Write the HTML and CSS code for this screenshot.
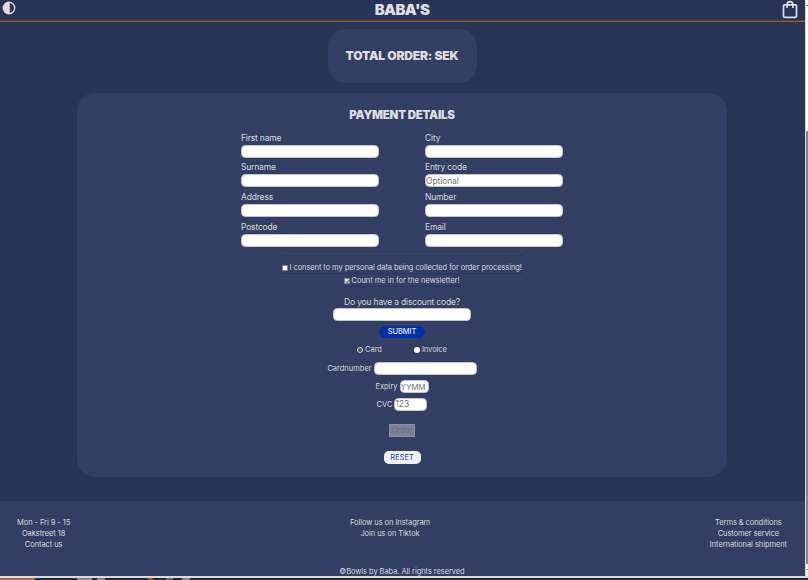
FILE: index.html
```html
<!DOCTYPE html>
<html lang="en">
<head>
<meta charset="utf-8">
<title>BABA'S</title>
<link rel="stylesheet" href="styles.css">
</head>
<body>
<div class="window">
  <div class="page">
    <header class="header">
      <svg class="theme" viewBox="0 0 14 14"><circle cx="7" cy="7" r="5.7" fill="none" stroke="#dddde2" stroke-width="1.4"/><path d="M7.8 1A6 6 0 1 0 7.8 13Z" fill="#dddde2"/></svg>
      <h1 class="logo">BABA'S</h1>
      <svg class="bag" viewBox="0 0 16 19"><path d="M2.3 4.8H13.7Q14.5 4.8 14.5 5.6V16Q14.5 17.4 13.1 17.4H2.9Q1.5 17.4 1.5 16V5.6Q1.5 4.8 2.3 4.8ZM5.1 8V4.6A2.9 2.9 0 0 1 10.9 4.6V8" fill="none" stroke="#dddde2" stroke-width="1.7"/></svg>
    </header>
    <main class="main">
      <section class="total"><h2 class="title total-title">TOTAL ORDER: SEK</h2></section>
      <form class="payment">
        <h2 class="title payment-title">PAYMENT DETAILS</h2>
        <div class="fields">
          <label class="field">First name<input class="input"></label>
          <label class="field">City<input class="input"></label>
          <label class="field">Surname<input class="input"></label>
          <label class="field">Entry code<input class="input" placeholder="Optional"></label>
          <label class="field">Address<input class="input"></label>
          <label class="field">Number<input class="input"></label>
          <label class="field">Postcode<input class="input"></label>
          <label class="field">Email<input class="input"></label>
        </div>
        <label class="consent consent-data"><span class="box"></span><span class="consent-text">I consent to my personal data being collected for order processing!</span></label>
        <label class="consent consent-news"><span class="box checked"><svg class="tick" viewBox="0 0 6 6"><path d="M1 3L2.5 4.5L5 1.3" fill="none" stroke="#222" stroke-width="1"/></svg></span><span class="news-text">Count me in for the newsletter!</span></label>
        <label class="field discount"><span class="discount-text">Do you have a discount code?</span><input class="input"></label>
        <button type="button" class="submit">SUBMIT</button>
        <div class="methods">
          <label class="method"><span class="radio selected"></span>Card</label>
          <label class="method"><span class="radio"></span>Invoice</label>
        </div>
        <label class="card-row"><span class="card-label">Cardnumber</span><input class="input number"></label>
        <label class="card-row expiry-row">Expiry<input class="input expiry" placeholder="YYMM"></label>
        <label class="card-row cvc-row">CVC<input class="input cvc" placeholder="123"></label>
        <button type="button" class="order" disabled>Order</button>
        <button type="button" class="reset">RESET</button>
      </form>
    </main>
    <footer class="footer">
      <div class="links">
        <div class="col hours"><span>Mon - Fri 9 - 15</span><span>Oakstreet 18</span><span>Contact us</span></div>
        <div class="col social"><span>Follow us on Instagram</span><span>Join us on Tiktok</span></div>
        <div class="col terms"><span>Terms &amp; conditions</span><span>Customer service</span><span>International shipment</span></div>
      </div>
      <p class="copyright">©Bowls by Baba. All rights reserved</p>
    </footer>
  </div>
  <div class="scrollbar"><div class="arrow"></div><div class="thumb"></div><div class="arrow"></div></div>
</div>
<div class="taskbar"><i class="accent"></i><i class="chip"></i><i class="chip small"></i><i class="chip red"></i><i class="chip blue"></i><i class="chip small"></i></div>
</body>
</html>
```

FILE: styles.css
```css
* { box-sizing: border-box; }
body { margin: 0; width: 808px; height: 580px; overflow: hidden; background: #fff; font-family: Inter, sans-serif; color: #d5d7df; }
h1, h2, p { margin: 0; }
.window { display: flex; height: 576px; }
.page { width: 805px; background: #283555; display: flex; flex-direction: column; }
.header { height: 22px; border-bottom: 1px solid #b5521c; box-shadow: inset 0 -1px #494353; display: grid; grid-template-columns: 1fr auto 1fr; align-items: start; padding-right: 1px; }
.theme { width: 14px; height: 14px; margin: 1px 0 0 2px; display: block; }
.logo { font-size: 15px; line-height: 20px; font-weight: 900; color: #dcdde2; letter-spacing: -.6px; }
.bag { width: 16px; height: 19px; justify-self: end; margin-right: 6px; display: block; }
.main { display: flex; flex-direction: column; align-items: center; padding: 7px 1px 0 0; height: 479px; }
.total { width: 149px; height: 54px; border-radius: 18px; background: #344063; display: flex; justify-content: center; align-items: center; }
.title { font-size: 12px; line-height: 14px; font-weight: 900; color: #dcdde2; white-space: nowrap; letter-spacing: -.15px; }
.payment-title { font-size: 11.5px; letter-spacing: -.28px; margin-top: .5px; }
.payment { width: 650px; height: 384px; margin-top: 10px; border-radius: 18px; background: #344063; display: flex; flex-direction: column; align-items: center; padding-top: 14px; }
.fields { display: grid; grid-template-columns: 138px 138px; column-gap: 46px; margin-top: 11px; }
.field { display: flex; flex-direction: column; font-size: 8.5px; line-height: 10px; height: 29.8px; white-space: nowrap; letter-spacing: -.18px; }
.input { display: block; width: 138px; height: 13px; margin: 2px 0 0; padding: 0; border: 1px solid #c4c6cd; border-radius: 4.5px; background: #fff; font: 8.5px/11px Inter, sans-serif; color: #222; letter-spacing: -.1px; }
.input::placeholder { color: #757575; opacity: 1; }
.consent { display: flex; align-items: center; font-size: 7.5px; line-height: 10px; height: 13px; white-space: nowrap; letter-spacing: -.08px; }
.consent-data { margin-top: 3.5px; width: 241px; height: 19px; padding-top: 7px; border-top: 1px solid #2b3758; border-bottom: 1px solid #2b3758; }
.consent-news { width: 117px; padding-top: 2px; border-bottom: 1px solid #2b3758; letter-spacing: -.03px; }
.box { width: 6px; height: 6px; border: .5px solid #888; background: #fff; border-radius: 1px; margin-right: 2px; flex: none; }
.checked { background: #ddd; }
.tick { display: block; width: 5px; height: 5px; }
.discount { margin-top: 9.8px; align-items: center; height: 24px; }
.discount .input { margin-top: 1px; }
.submit { width: 46px; height: 12px; margin-top: 5px; padding: 0; border: 0; border-radius: 6px; background: #002faa; color: #e5e8f2; font: 500 7.5px/12px Inter, sans-serif; letter-spacing: -.1px; }
.methods { display: flex; gap: 32px; margin-top: 7.5px; font-size: 7.5px; line-height: 10px; letter-spacing: -.05px; }
.method { display: flex; align-items: center; }
.radio { width: 6px; height: 6px; border-radius: 50%; background: #fff; margin-right: 2px; }
.selected { border: 1.5px solid #ddd; background: #555; }
.card-row { display: flex; align-items: center; gap: 2px; height: 13px; margin-top: 7px; font-size: 7.5px; }
.card-row .input { margin: 0; }
.card-row .number { width: 103px; }
.expiry-row, .cvc-row { margin-top: 4.7px; }
.card-row .expiry { width: 29px; font-size: 8px; }
.card-row .cvc { width: 33px; }
.order { width: 26px; height: 13px; margin-top: 13.5px; padding: 0; border: 1px solid #8c8f9b; background: #7d8296; color: #656a7e; font: 7.5px/11px Inter, sans-serif; }
.reset { width: 37px; height: 13px; margin-top: 13.5px; padding: 0; border: 0; border-radius: 5px; background: #f0f1f5; color: #2347a0; font: 7.5px/13px Inter, sans-serif; }
.footer { height: 75px; background: #344063; font-size: 7.5px; line-height: 11px; padding: 16px 1px 0 0; white-space: nowrap; letter-spacing: -.07px; }
.links { display: flex; justify-content: space-between; padding: 0 17px 0 17px; height: 50px; }
.copyright { text-align: center; line-height: 10px; }
.col { display: flex; flex-direction: column; align-items: center; }
.scrollbar { width: 3px; border-left: 1px solid #d5d8e0; background: #fff; display: flex; flex-direction: column; align-items: flex-end; }
.arrow { width: 2px; height: 1px; margin-top: 5px; background: #999; }
.thumb { width: 2px; height: 433px; margin-top: 125px; background: #858585; }
.taskbar { height: 4px; border-top: 2px solid #dcdce0; background: #25272b; display: flex; }
.accent { width: 35px; background: #b5603b; margin-right: 42px; }
.chip { width: 15px; background: #888; margin-right: 5px; }
.small { width: 8px; }
.red { width: 5px; margin-left: 38px; background: #a44; }
.blue { width: 7px; margin-left: 8px; background: #667; margin-right: 9px; }
```
